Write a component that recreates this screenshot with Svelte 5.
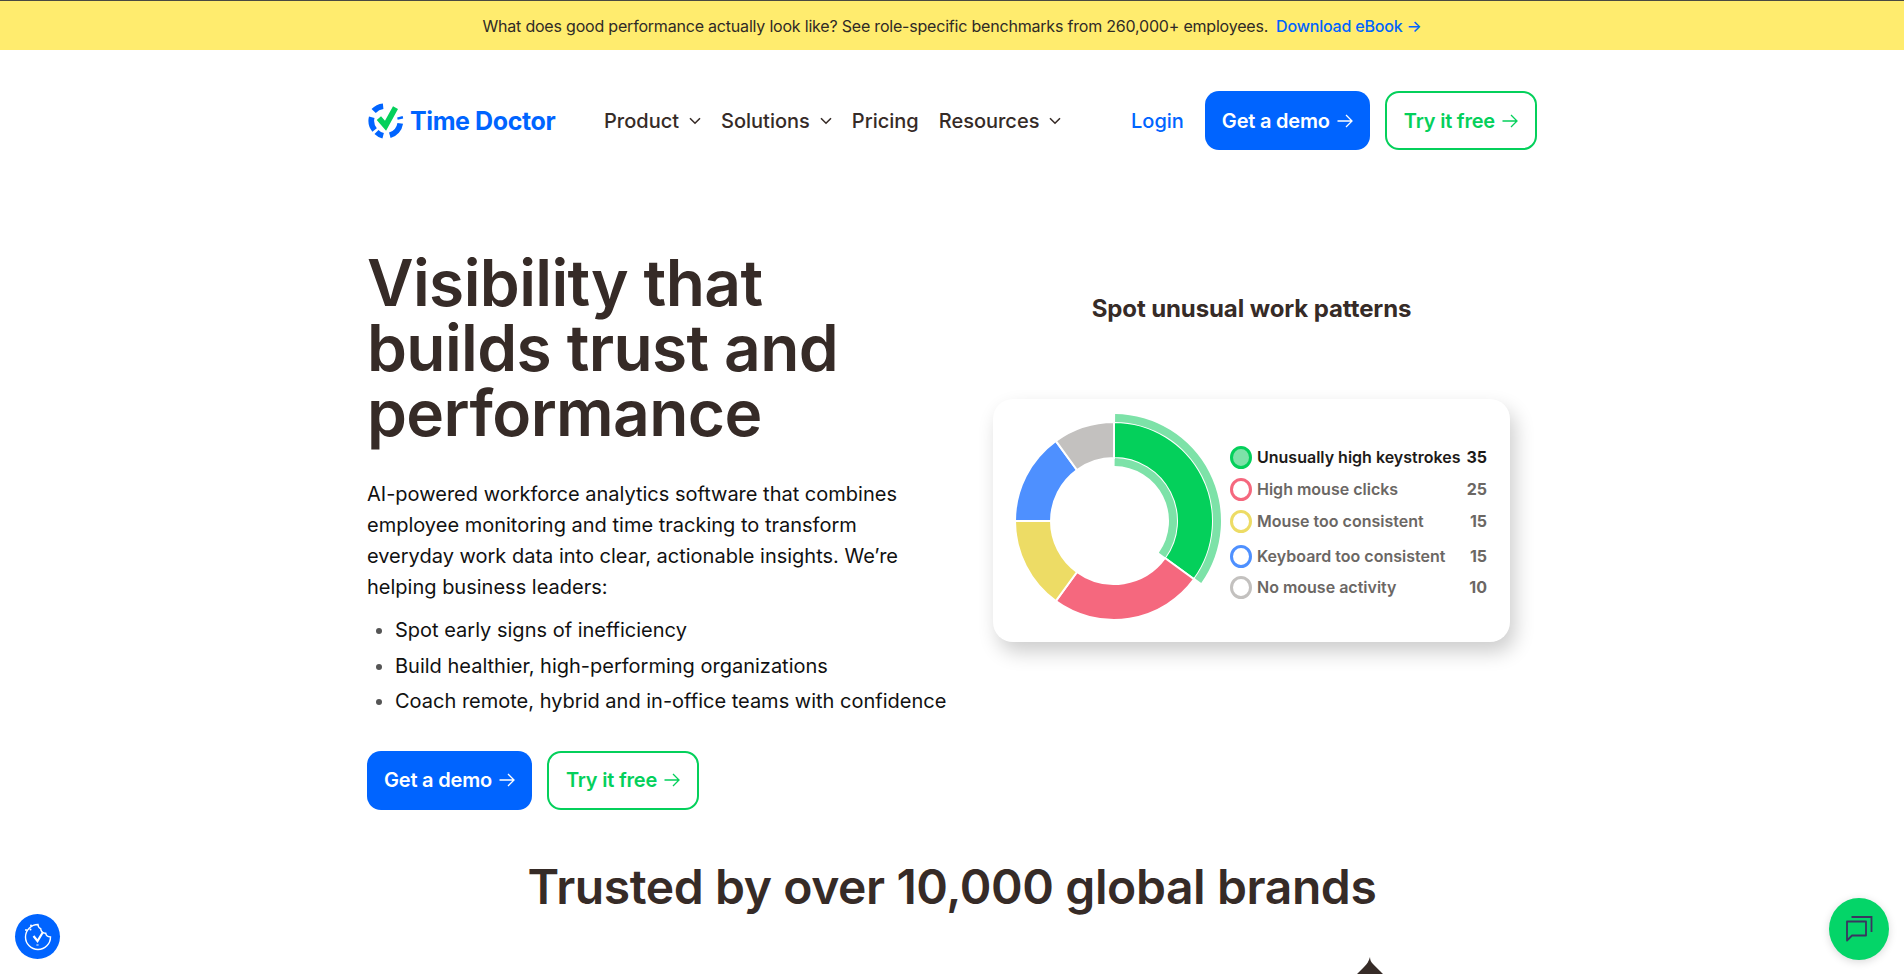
<script>
	const nav = [
		{ label: 'Product', caret: true },
		{ label: 'Solutions', caret: true },
		{ label: 'Pricing', caret: false },
		{ label: 'Resources', caret: true }
	];
	const bullets = [
		'Spot early signs of inefficiency',
		'Build healthier, high-performing organizations',
		'Coach remote, hybrid and in-office teams with confidence'
	];
	const legend = [
		{ label: 'Unusually high keystrokes', value: 35, color: '#04d05b', active: true },
		{ label: 'High mouse clicks', value: 25, color: '#f5687e' },
		{ label: 'Mouse too consistent', value: 15, color: '#eddc65' },
		{ label: 'Keyboard too consistent', value: 15, color: '#4e90ff' },
		{ label: 'No mouse activity', value: 10, color: '#c3c1bf' }
	];

	// ring segment, angles in degrees clockwise from 12 o'clock
	function arc(r0, r1, a0, a1) {
		const pt = (r, a) => {
			const t = ((a - 90) * Math.PI) / 180;
			return `${(110 + r * Math.cos(t)).toFixed(2)} ${(110 + r * Math.sin(t)).toFixed(2)}`;
		};
		const big = a1 - a0 > 180 ? 1 : 0;
		return `M${pt(r1, a0)}A${r1} ${r1} 0 ${big} 1 ${pt(r1, a1)}L${pt(r0, a1)}A${r0} ${r0} 0 ${big} 0 ${pt(r0, a0)}Z`;
	}

	let angle = 0;
	const slices = legend.map((l) => {
		const from = angle;
		angle += l.value * 3.6;
		return { color: l.color, from, to: angle };
	});
</script>

{#snippet arrow()}
	<svg class="arrow" viewBox="0 0 16 14" width="16" height="14" fill="none" stroke="currentColor" stroke-width="1.3">
		<path d="M0.5 7H15M9 1l6 6-6 6" />
	</svg>
{/snippet}

{#snippet buttons()}
	<a class="btn primary" href="#demo">Get a demo {@render arrow()}</a>
	<a class="btn outline" href="#free">Try it free {@render arrow()}</a>
{/snippet}

<div class="page">
	<div class="banner">
		<span>What does good performance actually look like? See role-specific benchmarks from 260,000+ employees.</span>
		<a href="#ebook">Download eBook →</a>
	</div>

	<div class="wrap">
		<header>
			<a class="logo" href="#home">
				<svg viewBox="0 0 40 40" width="38" height="38" fill="none">
					<g stroke="#0064ff" stroke-width="6">
						<path d="M8 29.5A15.5 15.5 0 0 1 5 16" />
						<path d="M7 9.5A15.5 15.5 0 0 1 17 4.5" />
						<path d="M35 22.5A15.5 15.5 0 0 1 24 35" />
						<path d="M17 35.5A15.5 15.5 0 0 1 10 31.5" />
						<path d="M34.6 15.5l0.6 2.5" />
					</g>
					<path d="M12.5 17l7 8L30 6" stroke="#04d05b" stroke-width="6" />
				</svg>
				<span>Time Doctor</span>
			</a>
			<nav>
				{#each nav as item}
					<a href="#menu">
						{item.label}
						{#if item.caret}
							<svg viewBox="0 0 12 8" width="12" height="8" fill="none" stroke="currentColor" stroke-width="1.6">
								<path d="M1 1.2l5 5 5-5" />
							</svg>
						{/if}
					</a>
				{/each}
			</nav>
			<div class="actions">
				<a class="login" href="#login">Login</a>
				{@render buttons()}
			</div>
		</header>

		<main>
			<section class="copy">
				<h1>Visibility that builds trust and performance</h1>
				<p>
					AI-powered workforce analytics software that combines employee monitoring and time tracking to
					transform everyday work data into clear, actionable insights. We’re helping business leaders:
				</p>
				<ul>
					{#each bullets as b}
						<li>{b}</li>
					{/each}
				</ul>
				<div class="cta">{@render buttons()}</div>
			</section>

			<section class="visual">
				<h2>Spot unusual work patterns</h2>
				<div class="card">
					<svg class="donut" viewBox="0 0 220 220" width="220" height="220">
						{#each slices as s, i}
							<path d={arc(63, 99, s.from, s.to)} fill={s.color} stroke="#fff" stroke-width="2" />
							{#if i === 0}
								<path d={arc(55, 63, s.from + 0.6, s.to - 0.6)} fill="#7de2a8" />
								<path d={arc(99, 107, s.from + 0.6, s.to - 0.6)} fill="#7de2a8" />
							{/if}
						{/each}
					</svg>
					<div class="legend">
						{#each legend as l}
							<div class="row" class:active={l.active}>
								<i style="border-color: {l.color}"></i>
								<span class="name">{l.label}</span>
								<b>{l.value}</b>
							</div>
						{/each}
					</div>
				</div>
			</section>
		</main>

		<h2 class="trusted">Trusted by over 10,000 global brands</h2>
		<svg class="brand" viewBox="0 0 40 18" width="40" height="18">
			<path d="M20 0c0 3 1 5 3 7l7 7 4 4H6l8-8c3-3 5-6 6-10z" fill="#362b27" />
		</svg>
	</div>

	<button class="cookie" aria-label="Cookie settings">
		<svg viewBox="0 0 30 30" width="30" height="30" fill="none" stroke="#fff" stroke-width="1.4">
			<path d="M15 2.5a12.5 12.5 0 1 0 12.5 12.5c-2.6 0-4.4-1.4-4.8-3.8-2.8.2-5-1.8-5-4.6-1.8-.8-2.7-2.3-2.7-4.1z" />
			<path d="M10.5 14l4 5 5.5-9" stroke-width="2.2" />
			<path d="M14.5 22.5v1" stroke-width="2.2" />
			<circle cx="8" cy="3.5" r="1" fill="#fff" stroke="none" />
			<circle cx="3" cy="8" r="1" fill="#fff" stroke="none" />
			<circle cx="7.5" cy="7.5" r="1" fill="#fff" stroke="none" />
		</svg>
	</button>
	<button class="chat" aria-label="Open chat">
		<svg viewBox="0 0 30 30" width="30" height="30" fill="none" stroke="#3a3560" stroke-width="1.8">
			<path d="M3 7.5h19v14H8l-5 5z" stroke-linejoin="round" />
			<path d="M7.5 3h20v15" />
		</svg>
	</button>
</div>

<style>
	:global(body) {
		margin: 0;
		background: #fff;
		color: #362b27;
		font-family: Inter, 'Liberation Sans', sans-serif;
	}
	a {
		text-decoration: none;
		color: inherit;
	}
	.page {
		height: 974px;
		overflow: hidden;
		position: relative;
	}
	.banner {
		height: 49px;
		border-top: 1px solid #4a4a42;
		background: #ffec6e;
		display: flex;
		justify-content: center;
		align-items: center;
		gap: 8px;
		font-size: 16px;
		letter-spacing: -0.2px;
		color: #2f2a26;
	}
	.banner a {
		color: #0064ff;
		font-weight: 500;
	}
	.wrap {
		width: 1170px;
		margin: 0 auto;
	}
	header {
		display: flex;
		align-items: center;
		padding-top: 41px;
		height: 59px;
	}
	.logo {
		display: flex;
		align-items: center;
		gap: 5px;
		color: #0064ff;
		font-size: 25px;
		font-weight: 700;
		letter-spacing: -0.4px;
		width: 237px;
	}
	nav {
		display: flex;
		gap: 20px;
		font-size: 20px;
		font-weight: 500;
	}
	nav a {
		display: flex;
		align-items: center;
		gap: 10px;
	}
	.actions {
		margin-left: auto;
		display: flex;
		align-items: center;
		gap: 15px;
	}
	.login {
		color: #0064ff;
		font-size: 20px;
		font-weight: 500;
		margin-right: 6px;
	}
	.btn {
		box-sizing: border-box;
		height: 59px;
		display: flex;
		align-items: center;
		gap: 7px;
		padding: 0 17px;
		border-radius: 14px;
		font-size: 20px;
		font-weight: 600;
		letter-spacing: -0.2px;
	}
	.primary {
		background: #0064ff;
		color: #fff;
	}
	.outline {
		border: 2px solid #04d05b;
		color: #04d05b;
	}
	main {
		display: flex;
		margin-top: 100px;
	}
	.copy {
		width: 580px;
	}
	h1 {
		margin: 0;
		font-size: 64px;
		line-height: 65px;
		font-weight: 600;
		letter-spacing: -0.6px;
		width: 500px;
	}
	p {
		margin: 34px 0 0;
		font-size: 20px;
		line-height: 31px;
		color: #111;
	}
	ul {
		margin: 10px 0 0;
		padding: 0 0 0 28px;
		font-size: 20px;
		line-height: 35.5px;
		color: #111;
	}
	li::marker {
		color: #555;
	}
	.cta {
		display: flex;
		gap: 15px;
		margin-top: 31px;
	}
	.visual {
		flex: 1;
		padding-left: 46px;
		display: flex;
		flex-direction: column;
	}
	.visual h2 {
		margin: 44px 0 0;
		width: 517px;
		text-align: center;
		font-size: 24px;
		line-height: 30px;
		font-weight: 700;
		letter-spacing: -0.1px;
	}
	.card {
		box-sizing: border-box;
		margin-top: 75px;
		width: 517px;
		height: 243px;
		border-radius: 20px;
		background: #fff;
		box-shadow: 5px 10px 20px rgba(0, 0, 0, 0.2);
		display: flex;
		align-items: flex-start;
		padding: 0 23px 0 11px;
	}
	.donut {
		flex: none;
		margin-top: 12px;
	}
	.legend {
		flex: 1;
		margin-top: 42px;
		margin-left: 6px;
	}
	.row {
		display: flex;
		align-items: center;
		height: 32px;
		font-size: 16px;
		font-weight: 600;
		color: #6b6764;
	}
	.row:nth-child(4) {
		margin-top: 3px;
		margin-bottom: -1px;
	}
	.row i {
		box-sizing: border-box;
		width: 22px;
		height: 23px;
		border-radius: 50%;
		border: 3px solid;
		margin-right: 5px;
	}
	.row b {
		margin-left: auto;
		font-weight: 700;
	}
	.row.active {
		color: #1d1a18;
	}
	.row.active i {
		background: #7de2a8;
	}
	.trusted {
		margin: 47px 0 0;
		text-align: center;
		font-size: 48px;
		line-height: 60px;
		font-weight: 600;
		letter-spacing: -0.4px;
	}
	.brand {
		position: absolute;
		left: 1350px;
		top: 957px;
	}
	.cookie,
	.chat {
		position: absolute;
		border: 0;
		border-radius: 50%;
		padding: 0;
		display: flex;
		align-items: center;
		justify-content: center;
	}
	.cookie {
		left: 15px;
		top: 914px;
		width: 45px;
		height: 45px;
		background: #0064ff;
	}
	.chat {
		left: 1829px;
		top: 898px;
		width: 60px;
		height: 62px;
		background: #04d568;
		box-shadow: 0 2px 8px rgba(0, 0, 0, 0.15);
	}
</style>
